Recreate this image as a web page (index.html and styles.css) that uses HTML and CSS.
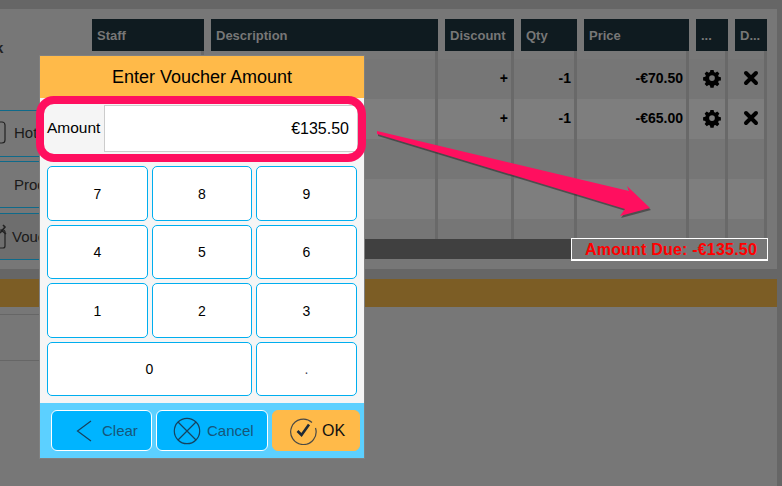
FILE: index.html
```html
<!DOCTYPE html>
<html lang="en">
<head>
<meta charset="utf-8">
<title>Enter Voucher Amount</title>
<link rel="stylesheet" href="styles.css">
</head>
<body>
<div class="page">
  <div class="panel">
    <aside class="side">
      <div class="side-title">k</div>
      <div class="side-btn side-hot">
        <svg class="side-icon" width="10" height="24" viewBox="0 0 10 24"><rect x="-4" y="1" width="9" height="21" rx="3" fill="none" stroke="#222" stroke-width="1.2"/></svg>
        <span>Hotel</span>
      </div>
      <div class="side-btn side-pro"><span>Products</span></div>
      <div class="side-btn side-vou">
        <svg class="side-icon" width="12" height="26" viewBox="0 0 12 26"><rect x="-3" y="6" width="8" height="18" rx="2" fill="none" stroke="#222" stroke-width="1.2"/><path d="M0 9 L5 3 L3 1 M1 6 L6 10" fill="none" stroke="#222" stroke-width="1.6"/></svg>
        <span>Vouchers</span>
      </div>
    </aside>
    <section class="sale">
      <div class="grid head">
        <div class="th">Staff</div>
        <div class="th">Description</div>
        <div class="th">Discount</div>
        <div class="th">Qty</div>
        <div class="th">Price</div>
        <div class="th">...</div>
        <div class="th">D...</div>
      </div>
      <div class="rows">
        <div class="grid row row-spacer"><i></i><i></i><i></i><i></i><i></i><i></i><i></i></div>
        <div class="grid row row-a">
          <div class="td"></div><div class="td"></div>
          <div class="td num">+</div><div class="td num">-1</div><div class="td num">-€70.50</div>
          <div class="td ico"><svg width="20" height="20" viewBox="0 0 18 18"><use href="#gear"/></svg></div>
          <div class="td ico ico-x"><svg width="16" height="16" viewBox="0 0 16 16"><use href="#cross"/></svg></div>
        </div>
        <div class="grid row row-b">
          <div class="td"></div><div class="td"></div>
          <div class="td num">+</div><div class="td num">-1</div><div class="td num">-€65.00</div>
          <div class="td ico"><svg width="20" height="20" viewBox="0 0 18 18"><use href="#gear"/></svg></div>
          <div class="td ico ico-x"><svg width="16" height="16" viewBox="0 0 16 16"><use href="#cross"/></svg></div>
        </div>
        <div class="grid row row-a"><i></i><i></i><i></i><i></i><i></i><i></i><i></i></div>
        <div class="grid row row-b"><i></i><i></i><i></i><i></i><i></i><i></i><i></i></div>
        <div class="grid row row-a row-short"><i></i><i></i><i></i><i></i><i></i><i></i><i></i></div>
      </div>
      <div class="totals">
        <div class="totals-bar"></div>
        <div class="due">Amount Due: -€135.50</div>
      </div>
    </section>
  </div>
  <div class="band"></div>
  <div class="lower">
    <div class="lower-row"></div>
    <div class="lower-row"></div>
  </div>
</div>

<svg class="defs" width="0" height="0">
  <defs>
    <g id="gear">
      <path fill="#000" fill-rule="evenodd" d="M7.2 0h3.6l.5 2.5 1.500.6 2.100-1.400 2.400 2.400-1.400 2.100.6 1.500 2.500.5v3.600l-2.500.5-.6 1.500 1.400 2.100-2.400 2.400-2.100-1.400-1.500.6-.5 2.500H7.200l-.5-2.500-1.500-.6-2.100 1.400L.7 16l1.400-2.100-.6-1.500L-1 11.900V8.300l2.500-.5.6-1.500L.7 4.100 3.100 1.700l2.100 1.400 1.500-.6zM9 6a3.200 3.200 0 1 0 0 6.400A3.200 3.200 0 0 0 9 6z" transform="translate(1.800 1.700) scale(.8)"/>
    </g>
    <g id="cross">
      <path d="M3 3 L13 13 M13 3 L3 13" stroke="#000" stroke-width="4" stroke-linecap="round" fill="none"/>
    </g>
  </defs>
</svg>

<svg class="arrow" width="782" height="486" viewBox="0 0 782 486">
  <polygon class="arrow-shadow" points="378,133 630,193 628,188 651,210 621,218 626,211 378,136"/>
  <polygon class="arrow-fill" points="377,131 629,191 627,186 650,208 620,216 625,209 377,134"/>
</svg>

<div class="modal">
  <header class="modal-head">Enter Voucher Amount</header>
  <div class="amount">
    <label class="amount-label">Amount</label>
    <div class="amount-input">€135.50</div>
  </div>
  <div class="keys">
    <button class="key">7</button><button class="key">8</button><button class="key">9</button>
    <button class="key">4</button><button class="key">5</button><button class="key">6</button>
    <button class="key">1</button><button class="key">2</button><button class="key">3</button>
    <button class="key key-wide">0</button><button class="key key-dot">.</button>
  </div>
  <footer class="modal-foot">
    <button class="act act-clear">
      <svg width="16" height="22" viewBox="0 0 16 22"><path d="M15 1 L1.500 11 L15 21" fill="none" stroke="#16425e" stroke-width="1.200"/></svg>
      <span>Clear</span>
    </button>
    <button class="act act-cancel">
      <svg width="28" height="28" viewBox="0 0 28 28"><circle cx="14" cy="14" r="12.700" fill="none" stroke="#16425e" stroke-width="1.200"/><path d="M5 5 L23 23 M23 5 L5 23" fill="none" stroke="#16425e" stroke-width="1.200"/></svg>
      <span>Cancel</span>
    </button>
    <button class="act act-ok">
      <svg width="28" height="28" viewBox="0 0 28 28"><path d="M23 5.500 A12.700 12.700 0 1 0 26.500 11" fill="none" stroke="#4a4a45" stroke-width="1.200"/><path d="M8.500 14 L12.500 18 L20 7.500" fill="none" stroke="#1f2a35" stroke-width="2.600"/></svg>
      <span>OK</span>
    </button>
  </footer>
</div>

<div class="highlight"></div>
</body>
</html>
```
FILE: styles.css
```css
* { box-sizing: border-box; }
html, body { margin: 0; padding: 0; }
body {
  width: 782px;
  height: 486px;
  overflow: hidden;
  position: relative;
  font-family: "Liberation Sans", Arial, sans-serif;
  background: #666;
}
.page {
  height: 486px;
  padding-top: 9px;
  padding-right: 5px;
  display: flex;
  flex-direction: column;
}
.panel {
  height: 260px;
  background: #777;
  display: flex;
}
.side {
  width: 92px;
  flex: none;
  overflow: hidden;
}
.side-title {
  height: 101px;
  font-size: 15px;
  font-weight: 700;
  color: #222;
  padding-top: 30px;
  margin-left: -5px;
}
.side-btn {
  height: 47px;
  border: 1px solid #0e6a8a;
  border-left: 0;
  display: flex;
  align-items: center;
  font-size: 15px;
  color: #1a1a1a;
  white-space: nowrap;
}
.side-pro { margin-top: 4px; padding-left: 14px; height: 47px; }
.side-hot { height: 47px; padding-bottom: 2px; }
.side-vou { margin-top: 5px; background: #6e6e6e; }
.side-icon { flex: none; margin-right: 4px; }
.side-vou .side-icon { margin-right: 0; }
.sale {
  width: 675px;
  flex: none;
  padding-top: 10px;
}
.grid {
  display: grid;
  grid-template-columns: 112px 227px 69px 56px 105px 32px 32px;
  column-gap: 7px;
}
.th {
  height: 32px;
  background: #0f1b20;
  color: #777;
  font-size: 13px;
  font-weight: 700;
  line-height: 33px;
  padding-left: 5px;
  white-space: nowrap;
  overflow: hidden;
}
.rows { height: 188px; }
.row { height: 40px; }
.row-spacer { height: 8px; background: #787878; }
.row-a { background: #767676; }
.row-b { background: #7e7e7e; }
.row-short { height: 20px; }
.row > i, .td {
  display: block;
  border-right: 3px solid #696969;
}
.num {
  font-size: 14px;
  font-weight: 700;
  color: #000;
  text-align: right;
  padding: 10px 3px 0 0;
  line-height: 18px;
}
.ico {
  display: flex;
  justify-content: center;
  padding-top: 9px;
  padding-left: 3px;
}
.ico-x { padding-top: 11px; }
.ico svg { display: block; }
.totals {
  height: 20px;
  display: flex;
}
.totals-bar {
  width: 479px;
  flex: none;
  background: #404040;
}
.due {
  width: 197px;
  flex: none;
  height: 23px;
  margin-top: -1px;
  border: 1px solid #fff;
  border-bottom-width: 2px;
  background: #777;
  color: #f00;
  font-size: 16px;
  font-weight: 700;
  letter-spacing: .2px;
  text-align: right;
  padding-right: 10px;
  line-height: 22px;
  position: relative;
  white-space: nowrap;
}
.band {
  height: 28px;
  margin-top: 10px;
  background: #7c5d25;
  flex: none;
}
.lower {
  flex: 1;
  background: #777;
  padding-top: 7px;
}
.lower-row {
  width: 40px;
  height: 46px;
  border-top: 1px solid #666;
}
.defs { position: absolute; }
.arrow {
  position: absolute;
  left: 0;
  top: 0;
  pointer-events: none;
}
.arrow-shadow { fill: rgba(40, 40, 40, .55); }
.arrow-fill { fill: #ff0f5f; }
.modal {
  position: absolute;
  left: 40px;
  top: 56px;
  width: 324px;
  height: 402px;
  background: #f5f5f5;
  box-shadow: 0 0 0 1px #808080;
  display: flex;
  flex-direction: column;
}
.modal-head {
  height: 42px;
  flex: none;
  background: #ffba49;
  color: #000;
  font-size: 18px;
  line-height: 42px;
  text-align: center;
}
.amount {
  height: 47px;
  margin: 7px 6px 14px 7px;
  display: flex;
  align-items: stretch;
  flex: none;
}
.amount-label {
  width: 57px;
  font-size: 15.5px;
  line-height: 46px;
  color: #000;
  flex: none;
}
.amount-input {
  flex: 1;
  background: #fff;
  border: 1px solid #ccc;
  text-align: right;
  font-size: 16px;
  line-height: 45px;
  padding-right: 8px;
  color: #000;
}
.keys {
  margin: 0 7px;
  display: grid;
  grid-template-columns: 101px 100px 101px;
  grid-template-rows: 55px 54px 55px 54px;
  gap: 4px;
  flex: none;
}
.key {
  font-family: inherit;
  background: #fff;
  border: 1px solid #00aeef;
  border-radius: 5px;
  font-size: 14px;
  color: #000;
  padding: 0;
}
.key-wide { grid-column: span 2; }
.key-dot { color: #445; }
.modal-foot {
  margin-top: auto;
  height: 55px;
  flex: none;
  background: #5cd0ff;
  padding: 7px 4px 7px 11px;
  display: flex;
  gap: 4px;
  align-items: stretch;
}
.act {
  font-family: inherit;
  border: 1px solid #fff;
  border-radius: 6px;
  background: #00b4ff;
  color: #16567a;
  font-size: 15px;
  padding: 0;
  display: flex;
  align-items: center;
  height: 41px;
}
.act svg { display: block; flex: none; }
.act-clear { width: 101px; padding-left: 24px; gap: 10px; }
.act-cancel { width: 112px; padding-left: 16px; gap: 6px; }
.act-ok {
  width: 88px;
  padding-left: 16px;
  gap: 5px;
  background: #ffba49;
  border-color: #ffba49;
  color: #111;
  font-size: 16px;
}
.highlight {
  position: absolute;
  left: 36px;
  top: 96px;
  width: 330px;
  height: 66px;
  border: 8px solid #ff0f5f;
  border-radius: 18px;
  pointer-events: none;
}
```
